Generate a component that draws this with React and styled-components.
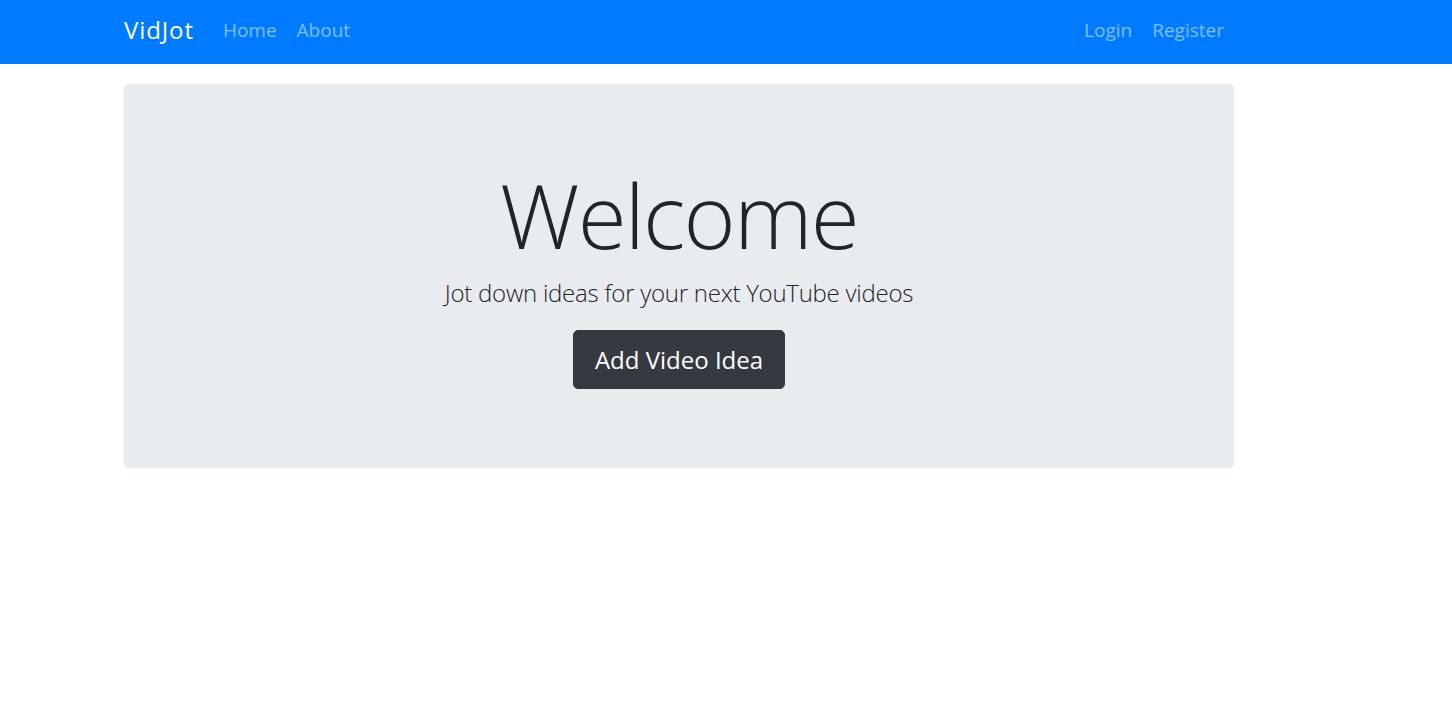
import React from 'react';
import styled, { createGlobalStyle } from 'styled-components';

const GlobalStyle = createGlobalStyle`
  body {
    margin: 0;
    background: #fff;
    color: #212529;
    font-family: 'Open Sans', 'Noto Sans', sans-serif;
  }
`;

const StyledNavbar = styled.nav`
  height: 64px;
  box-sizing: border-box;
  padding-bottom: 4px;
  background-color: #007bff;
  display: flex;
  align-items: center;
`;

const StyledContainer = styled.div`
  width: 1110px;
  margin-left: 124px;
  display: flex;
  align-items: center;
`;

const StyledBrand = styled.a`
  color: #fff;
  font-size: 24px;
  letter-spacing: 0.9px;
  text-decoration: none;
  margin-right: 19px;
  line-height: 36px;
`;

const StyledNavList = styled.ul`
  display: flex;
  list-style: none;
  margin: 0;
  padding: 0;
  margin-left: ${(props) => (props.right ? 'auto' : '0')};
`;

const StyledNavLink = styled.a`
  display: block;
  color: rgba(255, 255, 255, 0.5);
  font-size: 19px;
  line-height: 29px;
  padding: 0 10px;
  text-decoration: none;
`;

const StyledMain = styled.main`
  width: 1110px;
  margin: 20px 0 0 124px;
`;

const StyledJumbotron = styled.section`
  height: 384px;
  box-sizing: border-box;
  padding-top: 78px;
  background-color: #e9ecef;
  border-radius: 5px;
  display: flex;
  flex-direction: column;
  align-items: center;
  text-align: center;
`;

const StyledTitle = styled.h1`
  margin: 0 0 6px 0;
  font-size: 89px;
  font-weight: 300;
  letter-spacing: -1.8px;
  line-height: 1.2;
  color: #212529;
`;

const StyledLead = styled.p`
  margin: 0 0 19px 0;
  font-size: 24px;
  font-weight: 300;
  letter-spacing: -0.25px;
  line-height: 1.5;
  color: #212529;
`;

const StyledButton = styled.a`
  display: inline-block;
  box-sizing: border-box;
  height: 59px;
  padding: 0 21px;
  line-height: 57px;
  font-size: 24px;
  color: #fff;
  background-color: #343a40;
  border: 1px solid #343a40;
  border-radius: 5px;
  text-decoration: none;
`;

const App = () => {
  return (
    <>
      <GlobalStyle />
      <StyledNavbar>
        <StyledContainer>
          <StyledBrand href="#">VidJot</StyledBrand>
          <StyledNavList>
            <li><StyledNavLink href="#">Home</StyledNavLink></li>
            <li><StyledNavLink href="#">About</StyledNavLink></li>
          </StyledNavList>
          <StyledNavList right>
            <li><StyledNavLink href="#">Login</StyledNavLink></li>
            <li><StyledNavLink href="#">Register</StyledNavLink></li>
          </StyledNavList>
        </StyledContainer>
      </StyledNavbar>
      <StyledMain>
        <StyledJumbotron>
          <StyledTitle>Welcome</StyledTitle>
          <StyledLead>Jot down ideas for your next YouTube videos</StyledLead>
          <StyledButton href="#">Add Video Idea</StyledButton>
        </StyledJumbotron>
      </StyledMain>
    </>
  );
};

export default App;
